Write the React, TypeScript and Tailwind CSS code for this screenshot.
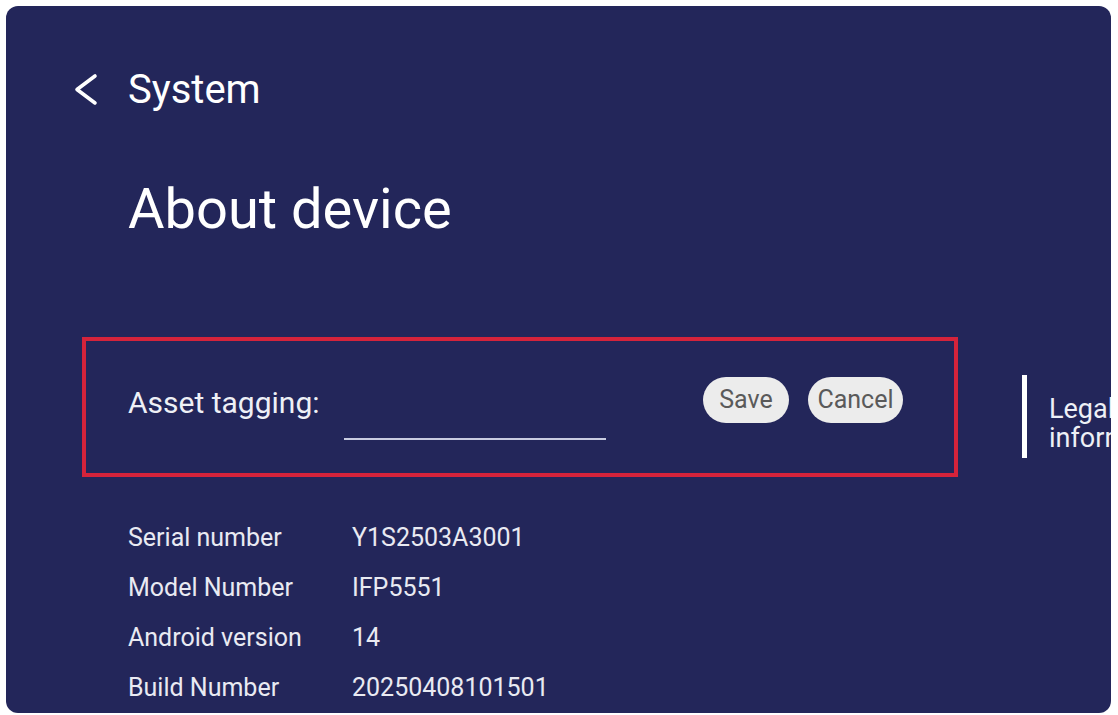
import React from "react";

export default function App() {
  const rows: [string, string][] = [
    ["Serial number", "Y1S2503A3001"],
    ["Model Number", "IFP5551"],
    ["Android version", "14"],
    ["Build Number", "20250408101501"],
  ];
  return (
    <div
      className="w-[1118px] h-[715px] bg-white pt-[6px] pl-[6px] overflow-hidden"
      style={{ fontFamily: "Roboto, 'Noto Sans', sans-serif" }}
    >
      <div className="w-[1105px] h-[707px] rounded-[12px] bg-[#23265a] overflow-hidden flex flex-col">
        {/* Header */}
        <div className="mt-[60px] h-[48px] flex items-center flex-none">
          <svg
            width="24"
            height="40"
            viewBox="0 0 24 40"
            className="ml-[68px] flex-none"
          >
            <path
              d="M21 6 L3 19.5 L21 33"
              fill="none"
              stroke="#ffffff"
              strokeWidth="3.6"
              strokeLinecap="round"
              strokeLinejoin="round"
            />
          </svg>
          <span className="ml-[30px] text-[40px] leading-[48px] text-white">System</span>
        </div>

        {/* Title */}
        <div className="mt-[67px] ml-[122px] h-[56px] text-[56px] leading-[56px] text-white flex-none">
          About device
        </div>

        {/* Asset tagging + legal */}
        <div className="mt-[100px] flex items-start flex-none">
          <div className="ml-[76px] w-[876px] h-[140px] border-[4px] border-[#d5233b] pt-[36px] pl-[42px] flex items-start flex-none">
            <div className="w-[216px] mt-[4px] text-[30px] leading-[44px] text-[#eef0f6] flex-none whitespace-nowrap">
              Asset tagging:
            </div>
            <div className="w-[262px] h-[63px] border-b-2 border-[#c9cce0] flex-none" />
            <button className="ml-[97px] w-[86px] h-[46px] rounded-full bg-[#ececec] text-[25px] leading-[46px] text-[#5a5a5a] flex-none text-center">
              Save
            </button>
            <button className="ml-[19px] w-[95px] h-[46px] rounded-full bg-[#ececec] text-[25px] leading-[46px] text-[#5a5a5a] flex-none text-center">
              Cancel
            </button>
          </div>
          <div className="ml-[64px] mt-[38px] w-[5px] h-[83px] bg-white flex-none" />
          <div className="ml-[22px] mt-[58px] w-[160px] text-[27px] leading-[29px] text-[#eef0f6] flex-none">
            Legal information
          </div>
        </div>

        {/* Info rows */}
        <div className="mt-[36px] ml-[122px] flex flex-col flex-none">
          {rows.map(([k, v]) => (
            <div key={k} className="h-[50px] flex items-start text-[25px] leading-[50px] text-[#e9eaf2]">
              <span className="w-[224px] flex-none whitespace-nowrap">{k}</span>
              <span className="whitespace-nowrap">{v}</span>
            </div>
          ))}
        </div>
      </div>
    </div>
  );
}
